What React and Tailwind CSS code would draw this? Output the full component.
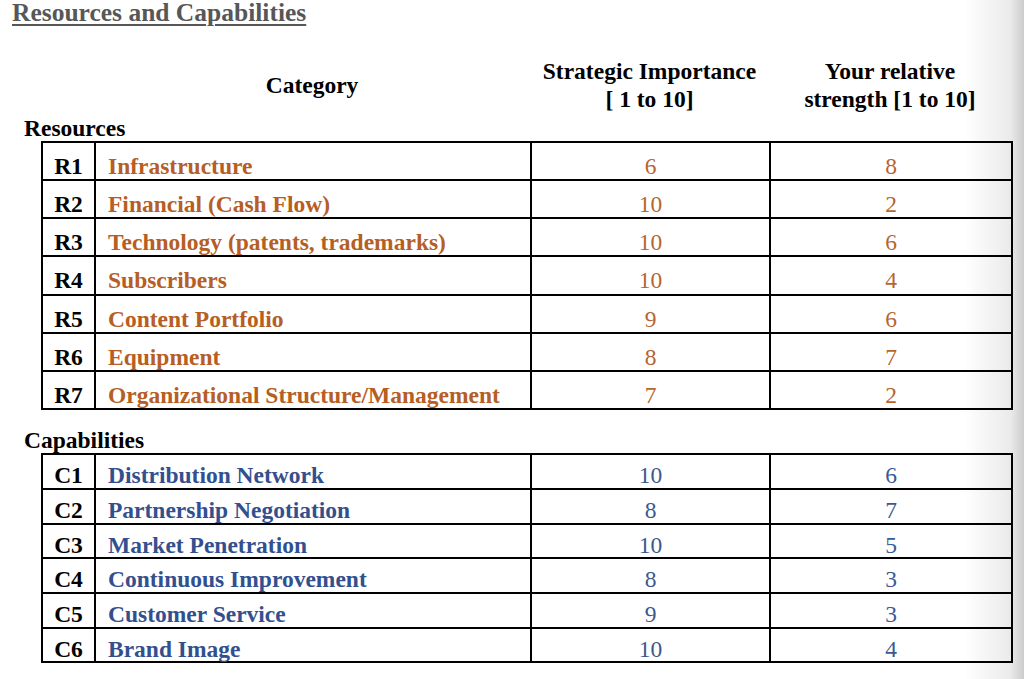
import React from "react";

// Resources & Capabilities assessment sheet

const resources = [
  ["R1", "Infrastructure", 6, 8],
  ["R2", "Financial (Cash Flow)", 10, 2],
  ["R3", "Technology (patents, trademarks)", 10, 6],
  ["R4", "Subscribers", 10, 4],
  ["R5", "Content Portfolio", 9, 6],
  ["R6", "Equipment", 8, 7],
  ["R7", "Organizational Structure/Management", 7, 2],
];

const capabilities = [
  ["C1", "Distribution Network", 10, 6],
  ["C2", "Partnership Negotiation", 8, 7],
  ["C3", "Market Penetration", 10, 5],
  ["C4", "Continuous Improvement", 8, 3],
  ["C5", "Customer Service", 9, 3],
  ["C6", "Brand Image", 10, 4],
];

const cols = "grid grid-cols-[51px_436px_239px_242px]";

const ScoreTable = ({ rows, tone, first, rest, pad }) => {
  const name = tone === "orange" ? "text-[#b65e24]" : "text-[#33508e]";
  const num = tone === "orange" ? "text-[#b6662f]" : "text-[#3c5991]";
  return (
    <div className="ml-[41px] w-[972px] border-2 border-black">
      {rows.map(([code, label, imp, str], i) => (
        <div
          key={code}
          className={`${cols} ${i === 0 ? first : `border-t-2 border-black ${rest}`}`}
        >
          <div className={`flex items-center justify-center font-bold text-black ${pad}`}>
            {code}
          </div>
          <div className={`flex items-center border-l-2 border-black pl-[12px] font-bold ${name} ${pad}`}>
            {label}
          </div>
          <div className={`flex items-center justify-center border-l-2 border-black ${num} ${pad}`}>
            {imp}
          </div>
          <div className={`flex items-center justify-center border-l-2 border-black ${num} ${pad}`}>
            {str}
          </div>
        </div>
      ))}
    </div>
  );
};

export default function App() {
  return (
    <div className="relative min-h-screen overflow-hidden bg-white font-['Liberation_Serif','Times_New_Roman',serif] text-[23.5px] leading-[26px]">
      <h1 className="pl-[12px] pt-[1px] text-[25.5px] font-bold leading-[23px] text-[#575757] underline decoration-[#575757] decoration-2 underline-offset-[3px]">
        Resources and Capabilities
      </h1>

      {/* column headings */}
      <div className={`${cols} ml-[43px] mt-[33px] h-[56px] font-bold leading-[28px] text-black`}>
        <div />
        <div className="flex items-center justify-center">Category</div>
        <div className="flex flex-col items-center justify-center text-center">
          <span>Strategic Importance</span>
          <span>[ 1 to 10]</span>
        </div>
        <div className="flex flex-col items-center justify-center text-center">
          <span>Your relative</span>
          <span>strength [1 to 10]</span>
        </div>
      </div>

      <div className="mt-[2px] pl-[24px] font-bold leading-[26px] text-black">Resources</div>
      <ScoreTable
        rows={resources}
        tone="orange"
        first="h-[36px]"
        rest="h-[38.2px]"
        pad="pt-[10px]"
      />

      <div className="mt-[18px] pl-[24px] font-bold leading-[25px] text-black">Capabilities</div>
      <ScoreTable
        rows={capabilities}
        tone="blue"
        first="h-[33px]"
        rest="h-[34.6px]"
        pad="pt-[7px]"
      />

      {/* page edge shading */}
      <div className="pointer-events-none absolute inset-y-0 right-0 w-[60px] bg-linear-to-r from-transparent via-black/[0.08] via-77% to-black/20" />
    </div>
  );
}
